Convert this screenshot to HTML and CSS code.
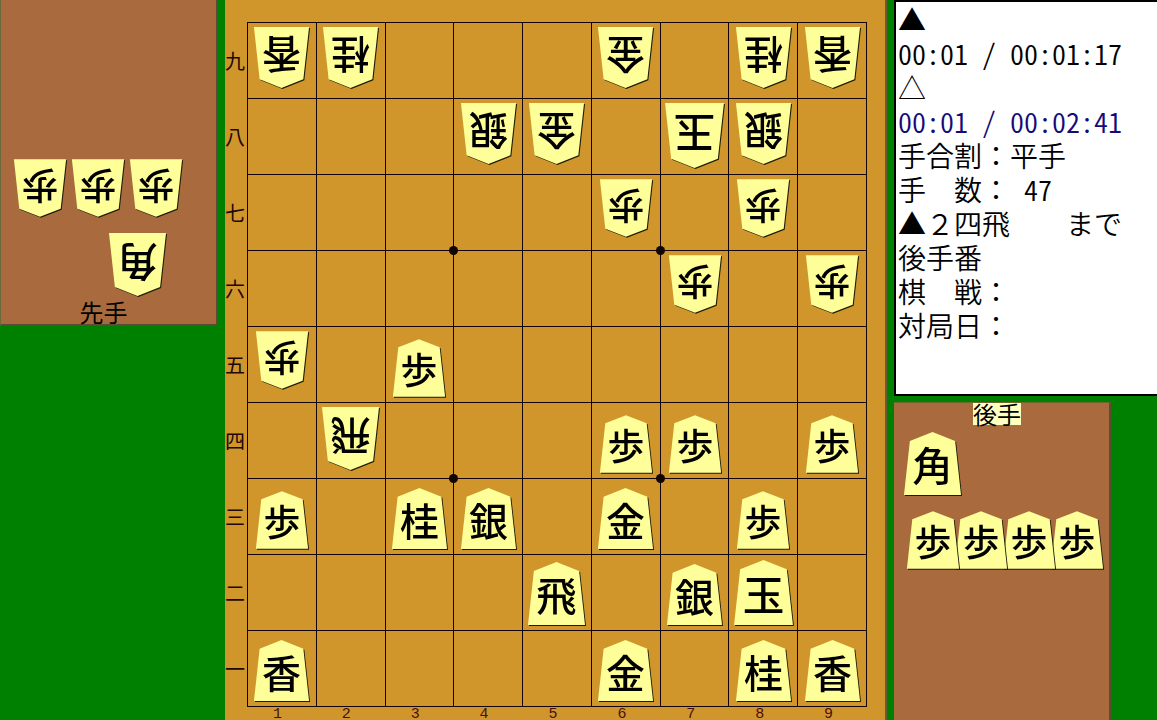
FILE: index.html
```html
<!DOCTYPE html>
<html lang="ja">
<head>
  <meta charset="UTF-8" />
  <title>将棋盤</title>
  <link rel="stylesheet" href="styles.css">
</head>
<body>
  <div class="container">
    <aside class="side-left">
      <section class="tray tray-sente">
        <div class="hand-row" data-hand="v歩 v歩 v歩"></div>
        <div class="hand-row hand-major" data-hand="v角"></div>
        <h2 class="tray-name">先手</h2>
      </section>
    </aside>

    <main class="board">
      <div class="ranks" id="ranks"></div>
      <div class="squares" id="squares"></div>
      <div class="files" id="files"></div>
    </main>

    <aside class="side-right">
      <section class="info">
        <p>▲</p>
        <p class="half">00:01 / 00:01:17</p>
        <p>△</p>
        <p class="half active">00:01 / 00:02:41</p>
        <p>手合割：平手</p>
        <p>手　数：<span class="half"> 47</span></p>
        <p>▲２四飛　　まで</p>
        <p>後手番</p>
        <p>棋　戦：</p>
        <p>対局日：</p>
      </section>
      <section class="tray tray-gote">
        <h2 class="tray-name turn">後手</h2>
        <div class="hand-row" data-hand="角"></div>
        <div class="hand-row hand-pawns" data-hand="歩 歩 歩 歩"></div>
      </section>
    </aside>
  </div>

  <script>
    // "v" marks a piece that points down, "." is an empty square
    const position = [
      "v香 v桂 . . . v金 . v桂 v香",
      ". . . v銀 v金 . v玉 v銀 .",
      ". . . . . v歩 . v歩 .",
      ". . . . . . v歩 . v歩",
      "v歩 . 歩 . . . . . .",
      ". v飛 . . . 歩 歩 . 歩",
      "歩 . 桂 銀 . 金 . 歩 .",
      ". . . . 飛 . 銀 玉 .",
      "香 . . . . 金 . 桂 香"
    ];
    const sizes = { "歩": "small", "飛": "large", "角": "large", "玉": "king" };

    function pieceSvg(code) {
      const down = code.startsWith("v");
      const name = code.replace("v", "");
      return `
        <svg class="piece ${sizes[name] || 'medium'}" viewBox="0 0 60 66">
          <g class="${down ? 'down' : 'up'}">
            <polygon points="30,1 53,10 59,65 1,65 7,10" />
            <text x="30" y="51">${name}</text>
          </g>
        </svg>`;
    }

    const squares = document.getElementById("squares");
    position.forEach((line, row) => {
      line.split(" ").forEach((code, col) => {
        const square = document.createElement("div");
        square.className = "square";
        if (code !== ".") {
          square.classList.add(code.startsWith("v") ? "top" : "bottom");
          square.innerHTML = pieceSvg(code);
        }
        if ((row === 3 || row === 6) && (col === 3 || col === 6)) {
          square.classList.add("star");
        }
        squares.appendChild(square);
      });
    });

    document.querySelectorAll(".hand-row").forEach(hand => {
      hand.innerHTML = hand.dataset.hand.split(" ").map(pieceSvg).join("");
    });

    document.getElementById("ranks").innerHTML =
      [..."九八七六五四三二一"].map(r => `<span>${r}</span>`).join("");
    document.getElementById("files").innerHTML =
      [..."123456789"].map(f => `<span>${f}</span>`).join("");
  </script>
</body>
</html>
```

FILE: styles.css
```css
* { box-sizing: border-box; }
body {
  margin: 0; background: #008000; color: #000; overflow: hidden;
  font-family: "Noto Sans CJK JP", sans-serif;
}
h2, p { margin: 0; font-weight: 400; }
.container {
  display: grid; grid-template-columns: 225fr 669fr 263fr;
  height: 100vh;
}

/* board */
.board {
  display: grid; grid-template-columns: 22px 1fr;
  grid-template-rows: auto auto; align-content: start;
  background: #d0962c; padding: 22px 18px 0 0; margin-right: 7px;
  border-right: 2px solid #6a5a3c;
  overflow: hidden;
}
.ranks { display: grid; grid-template-rows: repeat(9, 76px); }
.ranks span {
  display: flex; align-items: center;
  font-size: 20px; color: #200808;
}
.squares {
  display: grid; grid-template-columns: repeat(9, 1fr);
  grid-template-rows: repeat(9, 76px);
  border-right: 1px solid #140404; border-bottom: 1px solid #140404;
}
.square {
  display: flex; justify-content: center; position: relative;
  border-left: 1px solid #140404; border-top: 1px solid #140404;
}
.square.top { align-items: flex-start; padding-top: 3px; }
.square.bottom { align-items: flex-end; padding-bottom: 4px; }
.star::before {
  content: ""; position: absolute; left: -5px; top: -5px;
  width: 9px; height: 9px; border-radius: 50%; background: #100404;
}
.files {
  grid-column: 2; display: grid; grid-template-columns: repeat(9, 1fr);
}
.files span {
  text-align: center; padding-right: 8px; color: #4a1010;
  font: 15px/16px "Liberation Mono", monospace;
}

/* pieces */
.piece { display: block; flex: none; filter: drop-shadow(1px 1px 0 #1c1c08); }
.piece polygon { fill: #ffff99; }
.piece text {
  font-size: 41px; font-weight: 500; text-anchor: middle; fill: #000;
}
.down { transform: rotate(180deg); transform-origin: 30px 33px; }
.small { width: 54px; height: 60px; }
.medium { width: 57px; height: 63px; }
.large { width: 59px; height: 65px; }
.king { width: 61px; height: 67px; }

/* trays */
.tray { background: #a96b3e; }
.tray-name { font-size: 24px; line-height: 22px; }
.hand-row { display: flex; }
.tray-sente {
  margin-right: 7px; padding-top: 158px;
  border-left: 1px solid #6a6a3c;
  border-right: 2px solid #5c4c34; border-bottom: 2px solid #5c4c34;
}
.tray-sente .hand-row { gap: 4px; padding-left: 12px; }
.tray-sente .hand-major { padding: 14px 0 0 107px; }
.tray-sente .tray-name { padding: 4px 0 1px; text-align: center; margin-right: 10px; }
.side-right { display: flex; flex-direction: column; min-width: 0; overflow: hidden; }
.tray-gote {
  flex: 1; margin: 6px 46px 0 0; padding: 0 0 0 9px;
  border-top: 1px solid #6a6a2c; border-right: 2px solid #5c4c34;
}
.tray-gote .tray-name { text-align: center; margin-bottom: 6px; }
.tray-gote .turn { width: 48px; background: #ffffc0; margin-left: 70px; }
.tray-gote .hand-pawns {
  flex-direction: row-reverse; justify-content: flex-end;
  padding: 14px 0 0 3px;
}
.hand-pawns .piece { margin-right: -6px; }

/* game info */
.info {
  flex: none; height: 55vh; min-height: 350px; padding: 0 2px;
  background: #fff; border: 2px solid #000; border-right: 0;
}
.info p { font-size: 28px; line-height: 34px; font-weight: 350; white-space: pre; }
.info .half { font-feature-settings: "hwid"; }
.info .active { color: #140a78; }
```
